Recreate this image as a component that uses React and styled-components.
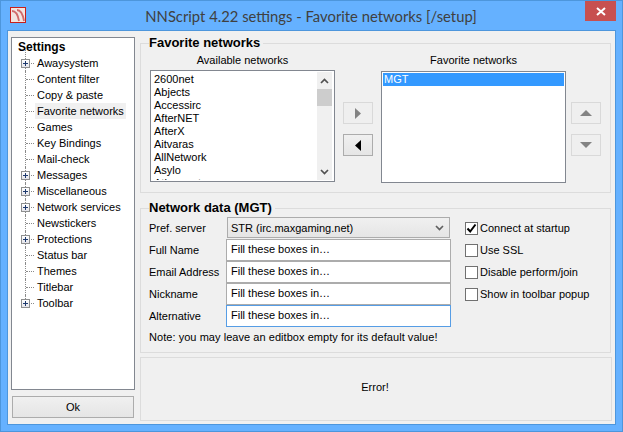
import React from 'react';
import styled, { createGlobalStyle } from 'styled-components';

const GlobalStyle = createGlobalStyle`
  html, body {
    margin: 0;
    padding: 0;
    background: #65b1ff;
  }
  * {
    box-sizing: border-box;
  }
`;

const Window = styled.div`
  width: 623px;
  height: 432px;
  padding: 0 6px 6px 6px;
  display: flex;
  flex-direction: column;
  background: #65b1ff;
  border: 1px solid #4d96dc;
  font-family: "Liberation Sans", Arial, sans-serif;
  font-size: 11px;
  color: #000;
`;

const TitleBar = styled.div`
  height: 29px;
  flex: none;
  margin: 0 -6px;
  padding: 0 6px 0 9px;
  display: flex;
  align-items: flex-start;
`;

const AppIcon = styled.div`
  width: 16px;
  height: 16px;
  margin-top: 6px;
  background: #f2e4e0;
  border: 1px solid #c8201c;
  display: flex;
`;

const TitleText = styled.div`
  flex: 1;
  height: 30px;
  line-height: 30px;
  text-align: center;
  font-family: Lato, sans-serif;
  font-size: 14.8px;
  color: #404040;
  padding-left: 11px;
`;

const CloseButton = styled.div`
  width: 31px;
  height: 20px;
  background: #c75050;
  display: flex;
  align-items: center;
  justify-content: center;
`;

const Client = styled.div`
  flex: 1;
  display: flex;
  gap: 5px;
  padding: 6px 3px 3px 3px;
  background: #f0f0f0;
  border: 1px solid #4d96dc;
`;

const LeftColumn = styled.div`
  width: 124px;
  display: flex;
  flex-direction: column;
  gap: 6px;
`;

const Tree = styled.div`
  height: 353px;
  background: #fff;
  border: 1px solid #828790;
  padding: 1px 0 0 6px;
`;

const TreeRoot = styled.div`
  height: 16px;
  line-height: 16px;
  font-size: 12px;
  font-weight: bold;
`;

const TreeRow = styled.div`
  height: 16px;
  display: flex;
  align-items: center;
`;

const Gutter = styled.div`
  position: relative;
  width: 17px;
  height: 16px;
  flex: none;

  &::before {
    content: '';
    position: absolute;
    left: 7px;
    top: ${({ $first }) => ($first ? '-5px' : '0')};
    bottom: ${({ $last }) => ($last ? '8px' : '0')};
    border-left: 1px dotted #8a8a8a;
  }
  &::after {
    content: '';
    position: absolute;
    left: 8px;
    right: 1px;
    top: 8px;
    border-top: 1px dotted #8a8a8a;
  }
`;

const Expander = styled.div`
  position: absolute;
  left: 3px;
  top: 4px;
  width: 9px;
  height: 9px;
  z-index: 1;
  background: linear-gradient(#fff, #e4e4ea);
  border: 1px solid #8e8f8f;

  &::before {
    content: '';
    position: absolute;
    left: 1px;
    top: 3px;
    width: 5px;
    height: 1px;
    background: #1e3a6e;
  }
  &::after {
    content: '';
    position: absolute;
    left: 3px;
    top: 1px;
    width: 1px;
    height: 5px;
    background: #1e3a6e;
  }
`;

const TreeLabel = styled.div`
  height: 16px;
  line-height: 16px;
  padding: 0 2px;
  background: ${({ $selected }) => ($selected ? '#f0f0f0' : 'transparent')};
`;

const OkButton = styled.div`
  height: 22px;
  width: 122px;
  margin-left: 1px;
  line-height: 20px;
  text-align: center;
  background: linear-gradient(#f0f0f0, #e5e5e5);
  border: 1px solid #acacac;
`;

const RightColumn = styled.div`
  width: 472px;
  display: flex;
  flex-direction: column;
`;

const Group = styled.div`
  border: 1px solid #dcdcdc;
  height: ${({ $height }) => $height}px;
  margin: ${({ $top }) => $top}px 1px 0 0;
  padding: 0 8px;
`;

const Legend = styled.div`
  width: fit-content;
  height: 14px;
  margin-top: -8px;
  padding-right: 3px;
  line-height: 14px;
  font-size: 13px;
  font-weight: bold;
  background: #f0f0f0;
`;

const NetworkColumns = styled.div`
  display: flex;
  margin: 4px 0 0 1px;
`;

const ListColumn = styled.div`
  width: 185px;
  flex: none;
`;

const ListCaption = styled.div`
  height: 13px;
  line-height: 13px;
  text-align: center;
  margin-bottom: ${({ $gap }) => $gap}px;
`;

const ListBox = styled.div`
  height: 112px;
  display: flex;
  background: #fff;
  border: 1px solid #828790;
  padding: ${({ $plain }) => ($plain ? '1px' : '1px 2px')};
  overflow: hidden;
`;

const ListItems = styled.div`
  flex: 1;
  overflow: hidden;
  padding: ${({ $plain }) => ($plain ? '0' : '1px 0 0 1px')};
`;

const ListItem = styled.div`
  height: 13px;
  line-height: 13px;
  padding-left: ${({ $selected }) => ($selected ? '1px' : '0')};
  background: ${({ $selected }) => ($selected ? '#3399ff' : 'transparent')};
  color: ${({ $selected }) => ($selected ? '#fff' : '#000')};
`;

const ScrollBar = styled.div`
  width: 15px;
  flex: none;
  background: #f0f0f0;
  display: flex;
  flex-direction: column;
  align-items: center;
`;

const ScrollArrow = styled.div`
  height: 17px;
  flex: none;
  display: flex;
  align-items: center;
`;

const ScrollThumb = styled.div`
  width: 15px;
  height: 17px;
  background: #cdcdcd;
`;

const ScrollTrack = styled.div`
  flex: 1;
`;

const ArrowColumn = styled.div`
  width: ${({ $width }) => $width}px;
  flex: none;
  padding-top: 48px;
  display: flex;
  flex-direction: column;
  align-items: ${({ $end }) => ($end ? 'flex-end' : 'center')};
  gap: 10px;
`;

const ArrowButton = styled.div`
  width: 30px;
  height: 22px;
  display: flex;
  align-items: center;
  justify-content: center;
  border: 1px solid ${({ $disabled }) => ($disabled ? '#d9d9d9' : '#acacac')};
  background: ${({ $disabled }) =>
    $disabled ? '#efefef' : 'linear-gradient(#f0f0f0, #e5e5e5)'};
`;

const NetworkForm = styled.div`
  display: flex;
  margin-top: 2px;
`;

const FormFields = styled.div`
  width: 302px;
  flex: none;
`;

const FieldRow = styled.div`
  height: 22px;
  display: flex;
  align-items: center;
`;

const FieldLabel = styled.div`
  width: 77px;
  flex: none;
`;

const Combo = styled.div`
  width: 223px;
  height: 21px;
  margin-left: 1px;
  align-self: flex-start;
  padding: 0 5px 0 3px;
  display: flex;
  align-items: center;
  justify-content: space-between;
  background: linear-gradient(#f0f0f0, #e5e5e5);
  border: 1px solid #acacac;
`;

const Edit = styled.div`
  width: 225px;
  height: 22px;
  padding: 0 0 2px 4px;
  display: flex;
  align-items: center;
  background: #fff;
  border: 1px solid ${({ $focused }) => ($focused ? '#569de5' : '#acacac')};
`;

const Note = styled.div`
  height: 13px;
  line-height: 13px;
  margin-top: 4px;
  letter-spacing: 0.05px;
`;

const Options = styled.div`
  flex: 1;
  padding-left: 14px;
`;

const Option = styled.div`
  height: 22px;
  display: flex;
  align-items: center;
  gap: 2px;
`;

const CheckBox = styled.div`
  width: 13px;
  height: 13px;
  flex: none;
  background: #fff;
  border: 1px solid #707070;
  display: flex;
  align-items: center;
  justify-content: center;
`;

const ErrorPanel = styled.div`
  height: 64px;
  margin-top: 4px;
  padding: 0 2px 5px 0;
  display: flex;
  align-items: center;
  justify-content: center;
  border: 1px solid #dcdcdc;
`;

const Chevron = ({ dir = 'down', color = '#505050' }) => (
  <svg width="9" height="6" viewBox="0 0 9 6">
    <path
      d={dir === 'up' ? 'M1 5 L4.5 1.5 L8 5' : 'M1 1 L4.5 4.5 L8 1'}
      fill="none"
      stroke={color}
      strokeWidth="1.7"
    />
  </svg>
);

const Triangle = ({ d, width, height, color }) => (
  <svg width={width} height={height} viewBox={`0 0 ${width} ${height}`}>
    <path d={d} fill={color} />
  </svg>
);

const treeItems = [
  { name: 'Awaysystem', expandable: true },
  { name: 'Content filter' },
  { name: 'Copy & paste' },
  { name: 'Favorite networks', selected: true },
  { name: 'Games' },
  { name: 'Key Bindings' },
  { name: 'Mail-check' },
  { name: 'Messages', expandable: true },
  { name: 'Miscellaneous', expandable: true },
  { name: 'Network services', expandable: true },
  { name: 'Newstickers' },
  { name: 'Protections', expandable: true },
  { name: 'Status bar' },
  { name: 'Themes' },
  { name: 'Titlebar' },
  { name: 'Toolbar', expandable: true },
];

const networks = [
  '2600net',
  'Abjects',
  'Accessirc',
  'AfterNET',
  'AfterX',
  'Aitvaras',
  'AllNetwork',
  'Asylo',
  'Athemnet',
];

const fields = [
  { label: 'Full Name' },
  { label: 'Email Address' },
  { label: 'Nickname' },
  { label: 'Alternative', focused: true },
];

const options = [
  { label: 'Connect at startup', checked: true },
  { label: 'Use SSL' },
  { label: 'Disable perform/join' },
  { label: 'Show in toolbar popup' },
];

const App = () => {
  return (
    <>
      <GlobalStyle />
      <Window>
        <TitleBar>
          <AppIcon>
            <svg width="14" height="14" viewBox="0 0 14 14">
              <path
                d="M1 3 C5 3 7 7 8 13 M6 2 C10 2 12 7 13 13"
                fill="none"
                stroke="#d06a6a"
                strokeWidth="1.8"
              />
            </svg>
          </AppIcon>
          <TitleText>NNScript 4.22 settings - Favorite networks [/setup]</TitleText>
          <CloseButton>
            <svg width="10" height="9" viewBox="0 0 10 9">
              <path d="M1 1 L9 8 M9 1 L1 8" stroke="#fff" strokeWidth="2" />
            </svg>
          </CloseButton>
        </TitleBar>
        <Client>
          <LeftColumn>
            <Tree>
              <TreeRoot>Settings</TreeRoot>
              {treeItems.map((item, i) => (
                <TreeRow key={item.name}>
                  <Gutter $first={i === 0} $last={i === treeItems.length - 1}>
                    {item.expandable && <Expander />}
                  </Gutter>
                  <TreeLabel $selected={item.selected}>{item.name}</TreeLabel>
                </TreeRow>
              ))}
            </Tree>
            <OkButton>Ok</OkButton>
          </LeftColumn>
          <RightColumn>
            <Group $height={150} $top={6}>
              <Legend>Favorite networks</Legend>
              <NetworkColumns>
                <ListColumn>
                  <ListCaption $gap={3}>Available networks</ListCaption>
                  <ListBox>
                    <ListItems>
                      {networks.map((n) => (
                        <ListItem key={n}>{n}</ListItem>
                      ))}
                    </ListItems>
                    <ScrollBar>
                      <ScrollArrow>
                        <Chevron dir="up" />
                      </ScrollArrow>
                      <ScrollThumb />
                      <ScrollTrack />
                      <ScrollArrow>
                        <Chevron />
                      </ScrollArrow>
                    </ScrollBar>
                  </ListBox>
                </ListColumn>
                <ArrowColumn $width={46}>
                  <ArrowButton $disabled>
                    <Triangle d="M0 0 L6 5.5 L0 11 Z" width={6} height={11} color="#838383" />
                  </ArrowButton>
                  <ArrowButton>
                    <Triangle d="M6 0 L0 5.5 L6 11 Z" width={6} height={11} color="#000" />
                  </ArrowButton>
                </ArrowColumn>
                <ListColumn>
                  <ListCaption $gap={4}>Favorite networks</ListCaption>
                  <ListBox $plain>
                    <ListItems $plain>
                      <ListItem $selected>MGT</ListItem>
                    </ListItems>
                  </ListBox>
                </ListColumn>
                <ArrowColumn $width={35} $end>
                  <ArrowButton $disabled>
                    <Triangle d="M6 0 L12 6 L0 6 Z" width={12} height={6} color="#838383" />
                  </ArrowButton>
                  <ArrowButton $disabled>
                    <Triangle d="M0 0 L12 0 L6 6 Z" width={12} height={6} color="#838383" />
                  </ArrowButton>
                </ArrowColumn>
              </NetworkColumns>
            </Group>
            <Group $height={145} $top={15}>
              <Legend>Network data (MGT)</Legend>
              <NetworkForm>
                <FormFields>
                  <FieldRow>
                    <FieldLabel>Pref. server</FieldLabel>
                    <Combo>
                      STR (irc.maxgaming.net)
                      <Chevron color="#606060" />
                    </Combo>
                  </FieldRow>
                  {fields.map((f) => (
                    <FieldRow key={f.label}>
                      <FieldLabel>{f.label}</FieldLabel>
                      <Edit $focused={f.focused}>Fill these boxes in…</Edit>
                    </FieldRow>
                  ))}
                  <Note>Note: you may leave an editbox empty for its default value!</Note>
                </FormFields>
                <Options>
                  {options.map((o) => (
                    <Option key={o.label}>
                      <CheckBox>
                        {o.checked && (
                          <svg width="11" height="11" viewBox="0 0 11 11">
                            <path d="M1.5 5.5 L4.2 8.5 L9.5 1.5" fill="none" stroke="#000" strokeWidth="2" />
                          </svg>
                        )}
                      </CheckBox>
                      {o.label}
                    </Option>
                  ))}
                </Options>
              </NetworkForm>
            </Group>
            <ErrorPanel>Error!</ErrorPanel>
          </RightColumn>
        </Client>
      </Window>
    </>
  );
};

export default App;
